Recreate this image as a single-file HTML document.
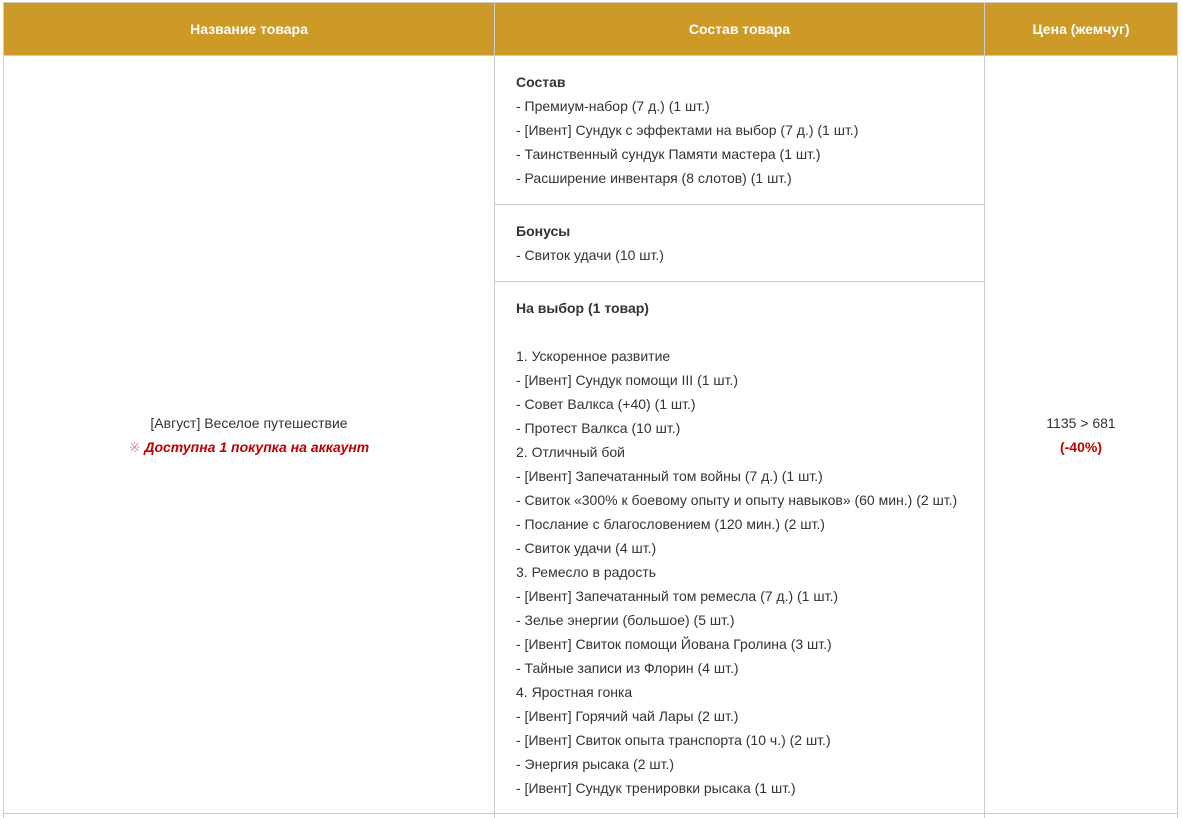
<!DOCTYPE html>
<html><head><meta charset="utf-8"><style>
body{margin:0;background:#fff;font-family:"Liberation Sans",Arial,sans-serif;font-size:14px;color:#333;}
.a{position:absolute;box-sizing:border-box}
.h{background:#cd9a28;color:#fff;font-weight:bold;text-align:center;line-height:53px;height:53px;top:2px;border:1px solid #ccc;border-bottom:none}
.l{position:absolute;background:#ccc}
.s{position:absolute;left:516px;line-height:24px;white-space:nowrap}
b{color:#333}
</style></head><body>
<div class="a h" style="left:3px;width:492px">Название товара</div>
<div class="a h" style="left:494px;width:491px">Состав товара</div>
<div class="a h" style="left:984px;width:194px">Цена (жемчуг)</div>
<div class="l" style="left:3px;top:2px;width:1175px;height:1px"></div>
<div class="l" style="left:3px;top:55px;width:1175px;height:1px"></div>
<div class="l" style="left:3px;top:813px;width:1175px;height:1px"></div>
<div class="l" style="left:3px;top:2px;width:1px;height:816px"></div>
<div class="l" style="left:494px;top:2px;width:1px;height:816px"></div>
<div class="l" style="left:984px;top:2px;width:1px;height:816px"></div>
<div class="l" style="left:1177px;top:2px;width:1px;height:816px"></div>
<div class="l" style="left:494px;top:204px;width:490px;height:1px"></div>
<div class="l" style="left:494px;top:281px;width:490px;height:1px"></div>
<div class="a" style="left:4px;width:490px;top:411px;line-height:24px;text-align:center">[Август] Веселое путешествие<br><span style="color:#c00000;font-weight:bold;font-style:italic"><span style="font-style:normal;font-weight:normal;color:#d99">※</span> Доступна 1 покупка на аккаунт</span></div>
<div class="a" style="left:985px;width:192px;top:411px;line-height:24px;text-align:center">1135 &gt; 681<br><span style="color:#c00000;font-weight:bold">(-40%)</span></div>
<div class="s" style="top:70px"><b>Состав</b><br>- Премиум-набор (7 д.) (1 шт.)<br>- [Ивент] Сундук с эффектами на выбор (7 д.) (1 шт.)<br>- Таинственный сундук Памяти мастера (1 шт.)<br>- Расширение инвентаря (8 слотов) (1 шт.)</div>
<div class="s" style="top:219px"><b>Бонусы</b><br>- Свиток удачи (10 шт.)</div>
<div class="s" style="top:296px"><b>На выбор (1 товар)</b><br><br>1. Ускоренное развитие<br>- [Ивент] Сундук помощи III (1 шт.)<br>- Совет Валкса (+40) (1 шт.)<br>- Протест Валкса (10 шт.)<br>2. Отличный бой<br>- [Ивент] Запечатанный том войны (7 д.) (1 шт.)<br>- Свиток «300% к боевому опыту и опыту навыков» (60 мин.) (2 шт.)<br>- Послание с благословением (120 мин.) (2 шт.)<br>- Свиток удачи (4 шт.)<br>3. Ремесло в радость<br>- [Ивент] Запечатанный том ремесла (7 д.) (1 шт.)<br>- Зелье энергии (большое) (5 шт.)<br>- [Ивент] Свиток помощи Йована Гролина (3 шт.)<br>- Тайные записи из Флорин (4 шт.)<br>4. Яростная гонка<br>- [Ивент] Горячий чай Лары (2 шт.)<br>- [Ивент] Свиток опыта транспорта (10 ч.) (2 шт.)<br>- Энергия рысака (2 шт.)<br>- [Ивент] Сундук тренировки рысака (1 шт.)</div>
</body></html>
